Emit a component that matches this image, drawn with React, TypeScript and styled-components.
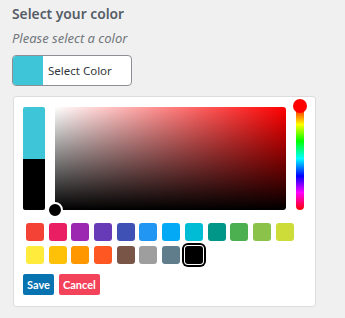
import React, { useState } from 'react';
import styled, { createGlobalStyle } from 'styled-components';

const GlobalStyle = createGlobalStyle`
	html, body {
		margin: 0;
		padding: 0;
		background: #f0f0f0;
	}
	body {
		font-family: 'Noto Sans', 'Open Sans', sans-serif;
	}
`;

const SWATCHES = [
	'#f44336', '#e91e63', '#9c27b0', '#673ab7', '#3f51b5', '#2196f3',
	'#03a9f4', '#00bcd4', '#009688', '#4caf50', '#8bc34a', '#cddc39',
	'#ffeb3b', '#ffc107', '#ff9800', '#ff5722', '#795548', '#9e9e9e',
	'#607d8b', '#000000',
];

export default () => {
	const [current, setCurrent] = useState('#000000');

	return (
		<>
			<GlobalStyle />
			<Wrapper>
				<Title>Select your color</Title>
				<Hint>Please select a color</Hint>
				<PickerButton type="button">
					<ButtonSwatch />
					<span>Select Color</span>
				</PickerButton>

				<Panel>
					<Picker>
						<Preview>
							<PreviewHalf color="#3ec6d8" />
							<PreviewHalf color={current} />
						</Preview>
						<Saturation>
							<SatCursor />
						</Saturation>
						<Hue>
							<HueCursor />
						</Hue>
					</Picker>

					<Swatches>
						{SWATCHES.map(c => (
							<Swatch
								key={c}
								color={c}
								$active={c === current}
								onClick={() => setCurrent(c)}
							/>
						))}
					</Swatches>

					<Actions>
						<ActionButton $bg="#0773b0">Save</ActionButton>
						<ActionButton $bg="#f2435a">Cancel</ActionButton>
					</Actions>
				</Panel>
			</Wrapper>
		</>
	);
};

const Wrapper = styled.div`
	padding: 4px 12px 0 12px;
`;

const Title = styled.h3`
	margin: 0;
	font-size: 13.8px;
	line-height: 20px;
	font-weight: 600;
	color: #555d66;
`;

const Hint = styled.p`
	margin: 5px 0 0;
	font-size: 13px;
	line-height: 18px;
	font-style: italic;
	color: #72777c;
`;

const PickerButton = styled.button`
	margin-top: 8px;
	display: flex;
	align-items: stretch;
	width: 120px;
	height: 31px;
	padding: 0;
	border: 1px solid #8c8f94;
	border-radius: 4px;
	background: #fff;
	overflow: hidden;
	font-family: inherit;
	font-size: 11.5px;
	color: #32373c;
	cursor: pointer;

	span {
		display: flex;
		align-items: center;
		padding-left: 5px;
	}
`;

const ButtonSwatch = styled.div`
	width: 30px;
	background: #3ec6d8;
`;

const Panel = styled.div`
	margin: 10px 0 0 1px;
	width: 303px;
	box-sizing: border-box;
	background: #fff;
	border: 1px solid #dcdcdc;
	border-radius: 3px;
	padding: 10px 11px 11px 9px;
`;

const Picker = styled.div`
	display: flex;
	height: 103px;
	gap: 10px;
`;

const Preview = styled.div`
	width: 22px;
	display: flex;
	flex-direction: column;
	border-radius: 2px;
	overflow: hidden;
`;

const PreviewHalf = styled.div`
	flex: 1;
	background: ${({ color }) => color};
`;

const Saturation = styled.div`
	position: relative;
	width: 231px;
	border-radius: 3px;
	background: linear-gradient(to top, #000, rgba(0, 0, 0, 0)),
		linear-gradient(to right, #fff, #ff0000);
`;

const SatCursor = styled.div`
	position: absolute;
	left: -8px;
	bottom: -8px;
	width: 12px;
	height: 12px;
	border: 2px solid #fff;
	border-radius: 50%;
	background: #000;
`;

const Hue = styled.div`
	position: relative;
	width: 8px;
	border-radius: 4px;
	background: linear-gradient(
		to bottom,
		#ff0000 0%,
		#ffff00 17%,
		#00ff00 33%,
		#00ffff 50%,
		#0000ff 67%,
		#ff00ff 83%,
		#ff0000 100%
	);
`;

const HueCursor = styled.div`
	position: absolute;
	left: -3px;
	top: -8px;
	width: 14px;
	height: 14px;
	border-radius: 50%;
	background: #ff0000;
`;

const Swatches = styled.div`
	margin: 13px 0 0 3px;
	display: flex;
	flex-wrap: wrap;
	gap: 4.7px;
	width: 273px;
`;

const Swatch = styled.div<{ color: string; $active?: boolean }>`
	width: 18px;
	height: 18px;
	border-radius: 3px;
	background: ${({ color }) => color};
	cursor: pointer;
	box-shadow: ${({ $active }) => ($active ? '0 0 0 1px #fff, 0 0 0 3px #000' : 'none')};
`;

const Actions = styled.div`
	margin-top: 10px;
	display: flex;
	gap: 5px;
`;

const ActionButton = styled.button<{ $bg: string }>`
	height: 21px;
	padding: 0 4px;
	border: none;
	border-radius: 2px;
	background: ${({ $bg }) => $bg};
	color: #fff;
	font-family: Lato, 'Noto Sans', sans-serif;
	font-size: 11px;
	font-weight: 700;
	cursor: pointer;
`;
